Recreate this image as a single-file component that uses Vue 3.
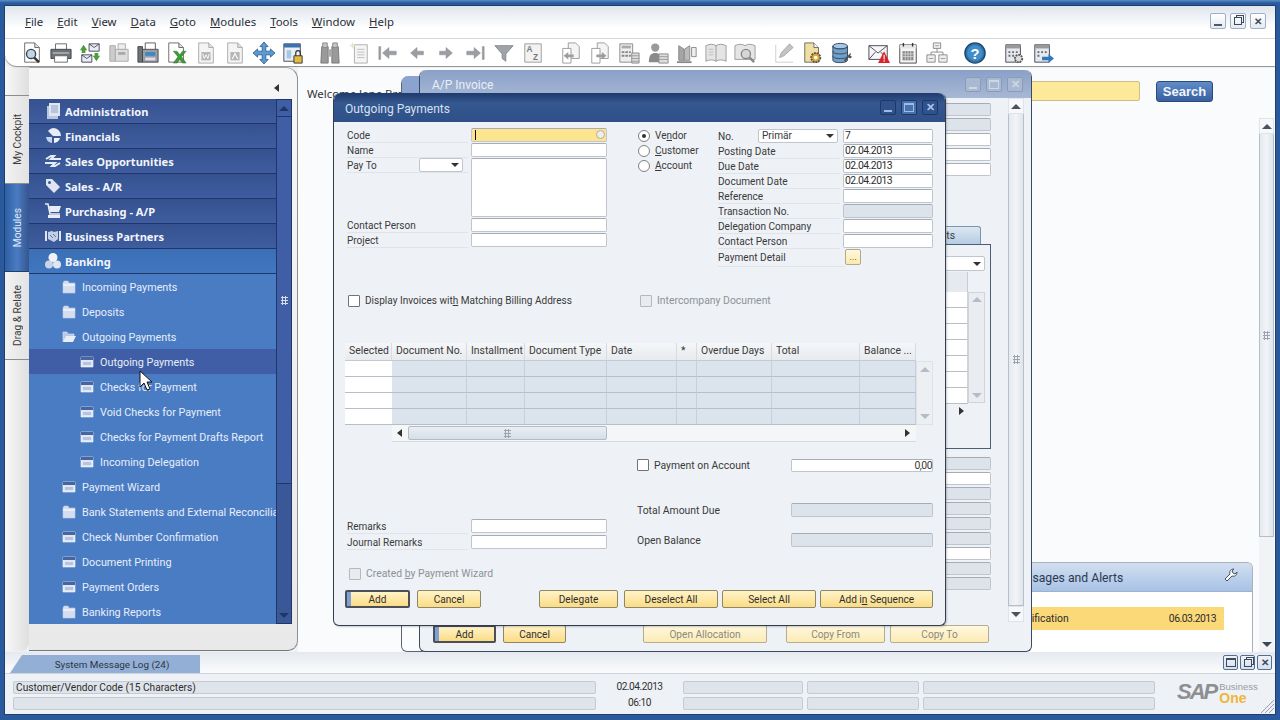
<template>
  <div class="app">
    <!-- icon sheet -->
    <svg class="sheet" width="0" height="0" aria-hidden="true">
      <defs>
        <symbol id="preview" viewBox="0 0 24 24"><path d="M4 1h11l5 5v16H4z" fill="#fff" stroke="#666"/><path d="M15 1v5h5" fill="#ddd" stroke="#666"/><circle cx="11" cy="13" r="5" fill="#bcd6ee" stroke="#444" stroke-width="1.5"/><path d="M14.5 17l5 5" stroke="#333" stroke-width="2.5"/></symbol>
        <symbol id="print" viewBox="0 0 24 24"><path d="M6 2h12v7H6z" fill="#fff" stroke="#666"/><path d="M1 8h22v10H1z" fill="#6d7278" stroke="#444"/><path d="M3 11h18v2H3z" fill="#a5aab0"/><path d="M5 15h14v7H5z" fill="#fff" stroke="#666"/></symbol>
        <symbol id="mailx" viewBox="0 0 24 24"><path d="M11 2h11v8H11zM3 14h11v8H3z" fill="#e9eef5" stroke="#445"/><path d="M11 2l5.500 4 5.500-4M3 14l5.500 4 5.500-4" fill="none" stroke="#445"/><path d="M1 9l4-6 4 6H7v3H3V9zM23 15l-4 6-4-6h2v-3h4v3z" fill="#4f9d3a"/></symbol>
        <symbol id="faxoff" viewBox="0 0 24 24"><path d="M2 4h6v17H2z" fill="#ccc" stroke="#aaa"/><path d="M8 8h14v13H8z" fill="#ddd" stroke="#aaa"/><path d="M11 2h8v6h-8z" fill="#eee" stroke="#aaa"/><path d="M11 11h8v3h-8z" fill="#aaa"/></symbol>
        <symbol id="fax" viewBox="0 0 24 24"><path d="M1 5h5v17H1z" fill="#6d7278" stroke="#444"/><path d="M6 8h17v14H6z" fill="#9a9fa6" stroke="#444"/><path d="M9 1h11v7H9z" fill="#fff" stroke="#555"/><path d="M9 11h11v4H9z" fill="#3e86c6"/><path d="M9 17h11v3H9z" fill="#dde"/></symbol>
        <symbol id="excel" viewBox="0 0 24 24"><path d="M3 1h11l5 5v16H3z" fill="#fff" stroke="#666"/><path d="M14 1v5h5" fill="#ddd" stroke="#666"/><path d="M8 10h4l3 4 3-4h4l-5 6 5 7h-4l-3-4-3 4H8l5-7z" fill="#3f9a38" stroke="#276b22" stroke-width=".5"/></symbol>
        <symbol id="word" viewBox="0 0 24 24"><path d="M4 1h11l5 5v17H4z" fill="#f4f4f4" stroke="#aaa"/><path d="M15 1v5h5" fill="#ddd" stroke="#aaa"/><path d="M7 11h10v9H7z" fill="#b5b5b5"/><path d="M8.500 13l1.500 5 2-4 2 4 1.500-5" fill="none" stroke="#fff" stroke-width="1"/></symbol>
        <symbol id="pdf" viewBox="0 0 24 24"><path d="M4 1h11l5 5v17H4z" fill="#f4f4f4" stroke="#aaa"/><path d="M15 1v5h5" fill="#ddd" stroke="#aaa"/><path d="M7 11h10v9H7z" fill="#b5b5b5"/><path d="M9 18.500l3-6 3 6" fill="none" stroke="#fff" stroke-width="1.200"/></symbol>
        <symbol id="move" viewBox="0 0 24 24"><path d="M12 0l4.500 5H14v5h5V7.500l5 4.500-5 4.500V14h-5v5h2.500L12 24l-4.500-5H10v-5H5v2.500L0 12l5-4.500V10h5V5H7.500z" fill="#5b9bd5" stroke="#1f4f82" stroke-width=".8"/></symbol>
        <symbol id="lockwin" viewBox="0 0 24 24"><path d="M2 2h18v19H2z" fill="#e8eff7" stroke="#445"/><path d="M2 2h18v4H2z" fill="#3d73ad"/><path d="M5 9h5v9H5z" fill="#a9c5e4"/><path d="M13 15h9v8h-9z" fill="#e4b93f" stroke="#333"/><path d="M15 15v-3a2.500 2.500 0 015 0v3" fill="none" stroke="#333" stroke-width="1.300"/></symbol>
        <symbol id="binoc" viewBox="0 0 24 24"><path d="M3 5h7v18H2zM14 5h7l1 18h-8z" fill="#9a9a9a" stroke="#777"/><path d="M4 1h5v5H4zM15 1h5v5h-5z" fill="#c4c4c4" stroke="#888"/><path d="M10 8h4v8h-4z" fill="#aaa"/></symbol>
        <symbol id="newdoc" viewBox="0 0 24 24"><path d="M7 3h14v20H7z" fill="#f5f5f5" stroke="#aaa"/><path d="M10 8h8M10 11h8M10 14h8M10 17h8" stroke="#bbb"/><path d="M5 0l1 3 3 1-3 1-1 3-1-3-3-1 3-1z" fill="#e5e5c8"/></symbol>
        <symbol id="first" viewBox="0 0 24 24"><path d="M2 5h2v14H2zM6 12l7-6v4h8v4h-8v4z" fill="#9a9da1" stroke="#85888c" stroke-width=".5"/></symbol>
        <symbol id="prev" viewBox="0 0 24 24"><path d="M5 12l7-6v4h7v4h-7v4z" fill="#9a9da1" stroke="#85888c" stroke-width=".5"/></symbol>
        <symbol id="next" viewBox="0 0 24 24"><path d="M19 12l-7-6v4H5v4h7v4z" fill="#9a9da1" stroke="#85888c" stroke-width=".5"/></symbol>
        <symbol id="last" viewBox="0 0 24 24"><path d="M22 5h-2v14h2zM18 12l-7-6v4H3v4h8v4z" fill="#9a9da1" stroke="#85888c" stroke-width=".5"/></symbol>
        <symbol id="funnel" viewBox="0 0 24 24"><path d="M2 4h20l-8 9v8l-4-3v-5z" fill="#a0a3a7" stroke="#85888c"/></symbol>
        <symbol id="sortaz" viewBox="0 0 24 24"><path d="M3 2h18v20H3z" fill="#f2f2f2" stroke="#999"/><text x="5" y="11" font-size="9" font-weight="700" font-family="Liberation Sans" fill="#777">A</text><text x="12" y="20" font-size="9" font-weight="700" font-family="Liberation Sans" fill="#777">Z</text></symbol>
        <symbol id="pgback" viewBox="0 0 24 24"><path d="M9 1h8l4 4v13H9z" fill="#f4f4f4" stroke="#999"/><path d="M3 7h9v16H3z" fill="#fff" stroke="#999"/><path d="M4 15l5-4v2.500h6v3H9V19z" fill="#9a9da1"/></symbol>
        <symbol id="pgfwd" viewBox="0 0 24 24"><path d="M9 1h8l4 4v13H9z" fill="#f4f4f4" stroke="#999"/><path d="M3 7h9v16H3z" fill="#fff" stroke="#999"/><path d="M19 15l-5-4v2.500H8v3h6V19z" fill="#9a9da1"/></symbol>
        <symbol id="calc" viewBox="0 0 24 24"><path d="M2 2h14v20H2z" fill="#eee" stroke="#888"/><path d="M4 4h10v3H4z" fill="#aaa"/><path d="M4 10h3v2H4zM8 10h3v2H8zM12 10h2v2h-2zM4 14h3v2H4zM8 14h3v2H8zM12 14h2v2h-2z" fill="#888"/><path d="M15 12h8v11h-8z" fill="#ddd" stroke="#888"/><path d="M15 15h8M15 18h8M15 21h8" stroke="#999"/></symbol>
        <symbol id="person" viewBox="0 0 24 24"><circle cx="9" cy="6" r="4.500" fill="#9a9a9a"/><path d="M2 22c0-8 3-10 7-10s7 2 7 10z" fill="#8a8a8a"/><path d="M13 13h10v10H13z" fill="#ddd" stroke="#888"/><path d="M13 16h10M13 19h10" stroke="#999"/></symbol>
        <symbol id="scales" viewBox="0 0 24 24"><path d="M3 4l6 4v12H3z" fill="#a5a5a5" stroke="#888"/><path d="M9 8l6-4v16H9z" fill="#bbb" stroke="#888"/><path d="M1 22h16" stroke="#888" stroke-width="2"/><path d="M17 6h5v10h-5z" fill="#eee" stroke="#888"/></symbol>
        <symbol id="book" viewBox="0 0 24 24"><path d="M1 4c4-2 8-2 11 0 3-2 7-2 11 0v17c-4-2-8-2-11 0-3-2-7-2-11 0z" fill="#e5e5e5" stroke="#999"/><path d="M12 4v17" stroke="#999"/><path d="M4 8h5M4 11h5M4 14h5" stroke="#bbb"/></symbol>
        <symbol id="booksearch" viewBox="0 0 24 24"><path d="M1 4c4-2 8-2 11 0 3-2 7-2 11 0v15H1z" fill="#e5e5e5" stroke="#999"/><circle cx="13" cy="13" r="5" fill="#d6d6d6" stroke="#888" stroke-width="1.500"/><path d="M17 17l5 5" stroke="#888" stroke-width="2.500"/></symbol>
        <symbol id="pencil" viewBox="0 0 24 24"><path d="M3 22h19M3 3v19" stroke="#ccc"/><path d="M7 17l2-5L18 2l4 4-10 9z" fill="#c4c4c4" stroke="#aaa"/></symbol>
        <symbol id="docgear" viewBox="0 0 24 24"><path d="M3 1h10l5 5v16H3z" fill="#f0dfa0" stroke="#666"/><path d="M13 1v5h5" fill="#fff" stroke="#666"/><circle cx="15" cy="17" r="5" fill="#e0a82e" stroke="#555" stroke-width="2" stroke-dasharray="2 1"/><circle cx="15" cy="17" r="2" fill="#fff"/></symbol>
        <symbol id="dbtool" viewBox="0 0 24 24"><ellipse cx="10" cy="4.500" rx="8" ry="3" fill="#a5c6e4" stroke="#345"/><path d="M2 4.500v15c0 2 3 3 8 3s8-1 8-3v-15c0 2-3 3-8 3s-8-1-8-3z" fill="#6f9fcb" stroke="#345"/><path d="M2 10c0 2 3 3 8 3s8-1 8-3M2 15c0 2 3 3 8 3s8-1 8-3" fill="none" stroke="#345"/><path d="M14 20l6-7 2-1-1 3 2 1-2 2-2-1-3 5z" fill="#555"/></symbol>
        <symbol id="alert" viewBox="0 0 24 24"><path d="M1 4h20v15H1z" fill="#f7f7f7" stroke="#445"/><path d="M1 4l10 8 10-8M1 19l7-8M21 19l-7-8" fill="none" stroke="#445"/><path d="M17.500 10L24 23H11z" fill="#d8232a"/><path d="M17 14h1.200v5H17zM17 20h1.200v1.500H17z" fill="#fff"/></symbol>
        <symbol id="calendar" viewBox="0 0 24 24"><path d="M3 3h18v20H3z" fill="#f5f5f5" stroke="#444"/><path d="M3 3h18v4H3z" fill="#e5e5e5"/><path d="M7 1v4M17 1v4" stroke="#333" stroke-width="1.500"/><path d="M6 10h12v10H6z" fill="#888"/><path d="M6 13h12M6 16h12M9 10v10M12 10v10M15 10v10" stroke="#eee" stroke-width=".7"/></symbol>
        <symbol id="tree" viewBox="0 0 24 24"><path d="M8 1h8v6H8zM1 14h9v8H1zM14 14h9v8h-9z" fill="#eee" stroke="#888"/><path d="M12 7v4M5.500 14v-3h13v3" fill="none" stroke="#888"/><path d="M3 18h5M16 18h5M10 4h4" stroke="#999"/></symbol>
        <symbol id="help" viewBox="0 0 24 24"><circle cx="12" cy="12" r="11" fill="#2f73ad" stroke="#1c4468" stroke-width="1.500"/><circle cx="12" cy="12" r="8.500" fill="#3f8ec9"/><text x="12" y="18" text-anchor="middle" font-size="16" font-weight="700" font-family="Liberation Sans" fill="#fff">?</text></symbol>
        <symbol id="griddoc" viewBox="0 0 24 24"><path d="M3 3h16v19H3z" fill="#e5e8ec" stroke="#445"/><path d="M3 3h16v4H3z" fill="#999"/><path d="M6 10h2v2H6zM10 10h2v2h-2zM14 10h2v2h-2zM6 14h2v2H6zM10 14h2v2h-2z" fill="#667"/><circle cx="17" cy="18" r="4" fill="#ddd" stroke="#555" stroke-width="2" stroke-dasharray="2 1"/></symbol>
        <symbol id="griddoc2" viewBox="0 0 24 24"><path d="M3 3h16v19H3z" fill="#e5e8ec" stroke="#445"/><path d="M3 3h16v4H3z" fill="#999"/><path d="M6 10h2v2H6zM10 10h2v2h-2zM14 10h2v2h-2zM6 14h2v2H6z" fill="#667"/><path d="M24 18l-6-5v3h-7v4h7v3z" fill="#2f78bb"/></symbol>

        <symbol id="s-docs" viewBox="0 0 16 16"><path d="M2 3h11v13H2z" fill="#b9c6de"/><path d="M4 0h11v13H4z" fill="#dfe6f2"/><path d="M6 3h7M6 5h7M6 7h7M6 9h7" stroke="#8ea2c6"/></symbol>
        <symbol id="s-pie" viewBox="0 0 16 16"><path d="M8 0a8 8 0 018 8H8L3 3a8 8 0 015-3z" fill="#e7edf6"/><path d="M1 9h6v6a7 7 0 01-6-6z" fill="#c7d4e8"/><path d="M9 10h6a7 7 0 01-6 5z" fill="#f2f5fa"/></symbol>
        <symbol id="s-swap" viewBox="0 0 16 16"><path d="M0 10h10l-3 3h3l5-3M16 6H6l3-3H6L1 6" fill="none" stroke="#e7edf6" stroke-width="2"/></symbol>
        <symbol id="s-tag" viewBox="0 0 16 16"><path d="M1 1h6l8 8-6 6-8-8z" fill="#dfe6f2"/><circle cx="4.500" cy="4.500" r="1.500" fill="#3a5898"/></symbol>
        <symbol id="s-cart" viewBox="0 0 16 16"><path d="M0 1h3l2 10h10" fill="none" stroke="#e7edf6" stroke-width="1.500"/><path d="M4 3h12l-2 6H5z" fill="#e7edf6"/><path d="M3 12h12v3H3z" fill="#e7edf6"/></symbol>
        <symbol id="s-hands" viewBox="0 0 16 16"><path d="M0 3h2v10H0zM14 3h2v10h-2z" fill="#dfe6f2"/><path d="M3 4l4-1 2 1 4-1v8l-4 3-6-3z" fill="#c2cfe4"/><path d="M5 7l3 3M8 6l3 3" stroke="#5b77ad"/></symbol>
        <symbol id="s-coins" viewBox="0 0 16 16"><circle cx="4" cy="11.500" r="4" fill="#c7d4e8"/><circle cx="12" cy="11.500" r="4" fill="#dfe6f2"/><circle cx="8" cy="4.500" r="4.500" fill="#eef2f8"/></symbol>
        <symbol id="folder" viewBox="0 0 14 14"><path d="M1 3l1-2h4l1 2h6v10H1z" fill="#d5deef" stroke="#bccbe6" stroke-width=".6"/><path d="M1 5h12" stroke="#fff"/></symbol>
        <symbol id="folderopen" viewBox="0 0 14 14"><path d="M1 12V2h4l1 2h6v2" fill="#b7c8e6" stroke="#dfe7f5" stroke-width=".6"/><path d="M1 12l3-6h10l-3 6z" fill="#e8eef8"/></symbol>
        <symbol id="winico" viewBox="0 0 14 14"><path d="M1 2h12v10H1z" fill="#dfe7f4" stroke="#f5f8fc" stroke-width=".6"/><path d="M1 2h12v3H1z" fill="#4a649e"/><path d="M3 7h8v3H3z" fill="#b5c5e1"/></symbol>
      </defs>
    </svg>

    <div class="frame">
      <div class="menubar">
        <span v-for="m in menus" :key="m" class="menu-item">{{ m }}</span>
        <div class="win-btns">
          <span class="mini"><i class="g-min"></i></span>
          <span class="mini"><i class="g-rest"></i></span>
          <span class="mini mini-x">✕</span>
        </div>
      </div>

      <div class="toolbar">
        <span v-for="t in tools" :key="t.id" class="tool" :style="{ marginLeft: t.gap + 'px' }">
          <svg width="22" height="22"><use :href="'#' + t.id" /></svg>
        </span>
      </div>

      <div class="middle">
        <div class="sidetabs">
          <div class="stab-top"></div>
          <div class="stab"><span>My Cockpit</span></div>
          <div class="stab on"><span>Modules</span></div>
          <div class="stab"><span>Drag &amp; Relate</span></div>
          <div class="stab-rest"></div>
        </div>

        <div class="sidepanel">
          <div class="panel-top"><i class="tri-l"></i></div>
          <div class="panel-list">
            <ul class="modules">
              <li v-for="r in modules" :key="r.label + r.level" class="mod" :class="['lv' + r.level, { open: r.open, sel: r.sel }]">
                <svg class="mod-ico"><use :href="'#' + r.icon" /></svg>
                <span>{{ r.label }}</span>
              </li>
            </ul>
            <div class="mod-scroll">
              <div class="mod-cap"><i class="tri-u dark"></i></div>
              <div class="mod-thumb"><span class="dots"></span></div>
              <i class="tri-d dark"></i>
            </div>
          </div>
        </div>

        <div class="desk">
          <div class="cockpit-top">
            <span class="welcome">Welcome Jane Brown</span>
            <div class="search">
              <div class="search-field"></div>
              <button class="search-btn">Search</button>
            </div>
          </div>
          <div class="cockpit-main">
            <div class="cockpit-content">
              <div class="alerts">
                <div class="alerts-head">
                  <span>Messages and Alerts</span>
                  <svg width="14" height="14" viewBox="0 0 14 14"><path d="M3 13l-2-2 5-5c-1-3 1-5 4-5L8 3l1 2 2 1 2-2c0 3-2 5-5 4z" fill="#fff" stroke="#456" stroke-width="1"/></svg>
                </div>
                <div class="alerts-row"><span>Notification</span><span class="num">06.03.2013</span></div>
              </div>
            </div>
            <div class="vscroll main-scroll">
              <div class="sb-btn"><i class="tri-u"></i></div>
              <div class="sb-thumb" style="height: 403px"><span class="dots"></span></div>
              <div class="sb-rest"></div>
              <i class="tri-d"></i>
            </div>
          </div>

          <!-- windows on the desktop -->
          <div class="win-back"></div>

          <div class="win-ap">
            <div class="ap-head">
              <span>A/P Invoice</span>
              <div class="dlg-btns faded">
                <span class="wbtn"><i class="g-min"></i></span>
                <span class="wbtn"><i class="g-max"></i></span>
                <span class="wbtn">✕</span>
              </div>
            </div>
            <div class="ap-body">
              <div class="ap-main">
                <div class="ap-stack" style="padding-top: 5px">
                  <div v-for="(f, i) in apTop" :key="i" class="inp ap-f" :class="{ off: f }"></div>
                </div>
                <div class="ap-tab"><span>Attachments</span></div>
                <div class="ap-panel">
                  <div class="ap-combo"><i class="tri-d dark"></i></div>
                  <div class="ap-grid">
                    <div class="ap-cells">
                      <div class="ap-cell-h"></div>
                      <div v-for="n in 7" :key="n" class="ap-cell"></div>
                    </div>
                    <div class="ap-gsb"><i class="tri-u soft"></i><i class="tri-d soft"></i></div>
                  </div>
                  <div class="ap-arrow"><i class="tri-r"></i></div>
                </div>
                <div class="ap-stack" style="margin-top: 8px">
                  <div v-for="(f, i) in apLow" :key="i" class="inp ap-f" :class="{ off: f }"></div>
                </div>
                <div class="ap-buttons">
                  <button class="btn def" style="width: 63px">Add</button>
                  <button class="btn" style="width: 63px; margin-left: 7px">Cancel</button>
                  <button class="btn dis" style="width: 124px; margin-left: 77px">Open Allocation</button>
                  <button class="btn dis" style="width: 99px; margin-left: 19px">Copy From</button>
                  <button class="btn dis" style="width: 99px; margin-left: 5px">Copy To</button>
                </div>
              </div>
              <div class="vscroll ap-scroll">
                <div class="sb-btn"><i class="tri-u"></i></div>
                <div class="sb-thumb" style="flex: 1"><span class="dots"></span></div>
                <div class="sb-btn"><i class="tri-d"></i></div>
              </div>
            </div>
          </div>

          <div class="dlg">
            <div class="dlg-head">
              <span>Outgoing Payments</span>
              <div class="dlg-btns">
                <span class="wbtn"><i class="g-min"></i></span>
                <span class="wbtn lit"><i class="g-max"></i></span>
                <span class="wbtn">✕</span>
              </div>
            </div>
            <div class="dlg-body">
              <div class="pay-top">
                <div class="pay-left">
                  <div class="line"><label>Code</label><div class="inp focus"><i class="caret"></i><i class="lookup"></i></div></div>
                  <div class="line"><label>Name</label><div class="inp"></div></div>
                  <div class="payto">
                    <label>Pay To<span class="combo small"><i class="tri-d dark"></i></span></label>
                    <div class="inp area"></div>
                  </div>
                  <div class="line"><label>Contact Person</label><div class="inp"></div></div>
                  <div class="line"><label>Project</label><div class="inp"></div></div>
                </div>
                <div class="pay-mid">
                  <div class="radio-line"><span class="radio on"></span><span>Ve<u>n</u>dor</span></div>
                  <div class="radio-line"><span class="radio"></span><span><u>C</u>ustomer</span></div>
                  <div class="radio-line"><span class="radio"></span><span><u>A</u>ccount</span></div>
                </div>
                <div class="pay-right">
                  <div class="rline">
                    <label class="no">No.<span class="combo wide">Primär<i class="tri-d dark"></i></span></label>
                    <div class="inp val">7</div>
                  </div>
                  <div v-for="f in rightFields" :key="f.label" class="rline">
                    <label>{{ f.label }}</label>
                    <div class="inp val num" :class="{ off: f.off }">{{ f.value }}</div>
                  </div>
                  <div class="rline detail">
                    <label>Payment Detail</label>
                    <button class="dots-btn">...</button>
                  </div>
                </div>
              </div>

              <div class="check-row">
                <span class="check"></span><span class="check-text wide">Display Invoices wit<u>h</u> Matching Billing Address</span>
                <span class="check off"></span><span class="check-text muted">Intercompany Document</span>
              </div>

              <div class="grid-wrap">
                <div class="grid">
                  <div class="ghead">
                    <span v-for="c in cols" :key="c.t" class="gh" :style="{ width: c.w + 'px' }">{{ c.t }}</span>
                  </div>
                  <div v-for="n in 4" :key="n" class="grow">
                    <span v-for="(c, i) in cols" :key="c.t" class="gc" :class="{ first: i === 0 }" :style="{ width: c.w + 'px' }"></span>
                  </div>
                </div>
                <div class="gscroll"><i class="tri-u soft"></i><i class="tri-d soft"></i></div>
              </div>
              <div class="hscroll">
                <i class="tri-l"></i>
                <div class="hthumb"><span class="dots h"></span></div>
                <i class="tri-r"></i>
              </div>

              <div class="account-row">
                <span class="check"></span><span class="check-text">Payment on Account</span>
                <div class="inp amount num">0,00</div>
              </div>

              <div class="lower">
                <div class="lower-left">
                  <div class="line"><label>Remarks</label><div class="inp"></div></div>
                  <div class="line gap1"><label>Journal Remarks</label><div class="inp"></div></div>
                </div>
                <div class="lower-right">
                  <div class="tline"><label>Total Amount Due</label><div class="inp off"></div></div>
                  <div class="tline"><label>Open Balance</label><div class="inp off"></div></div>
                </div>
              </div>

              <div class="wizard-row">
                <span class="check off"></span><span class="check-text muted">Created <u>b</u>y Payment Wizard</span>
              </div>

              <div class="dlg-buttons">
                <button class="btn def" style="width: 65px">Add</button>
                <button class="btn" style="width: 64px; margin-left: 7px">Cancel</button>
                <button class="btn" style="width: 79px; margin-left: 58px">Delegate</button>
                <button class="btn" style="width: 94px; margin-left: 6px">Deselect All</button>
                <button class="btn" style="width: 94px; margin-left: 4px">Select All</button>
                <button class="btn" style="width: 113px; margin-left: 4px">Add i<u>n</u> Sequence</button>
              </div>
            </div>
          </div>
        </div>
      </div>

      <div class="bottom">
        <div class="log-row">
          <div class="log-tab">System Message Log (24)</div>
          <div class="log-btns">
            <span class="mini small"><i class="g-max"></i></span>
            <span class="mini small"><i class="g-rest"></i></span>
            <span class="mini small mini-x">✕</span>
          </div>
        </div>
        <div class="status">
          <div class="status-grid">
            <div class="sf sf-main">Customer/Vendor Code (15 Characters)</div>
            <div class="sd num">02.04.2013</div>
            <div class="sf"></div><div class="sf"></div><div class="sf end"></div>
            <div class="sf sf-main"></div>
            <div class="sd num">06:10</div>
            <div class="sf"></div><div class="sf"></div><div class="sf end"></div>
          </div>
          <div class="logo">
            <span class="logo-sap">SAP</span>
            <span class="logo-b"><span>Business</span><b>One</b></span>
          </div>
          <svg class="grip" width="14" height="14" viewBox="0 0 14 14"><path d="M1 14L14 1M5 14l9-9M9 14l5-5" stroke="#9aa3ad"/></svg>
        </div>
      </div>
    </div>

    <svg class="cursor" width="14" height="21" viewBox="0 0 14 21"><path d="M1 1v16l4-4 3 7 3-1-3-7h5z" fill="#fff" stroke="#111"/></svg>
  </div>
</template>

<script setup>
const menus = ['File', 'Edit', 'View', 'Data', 'Goto', 'Modules', 'Tools', 'Window', 'Help']

// gap = extra space in front of the first icon of a group
const toolIds = [
  ['preview', 'print', 'mailx', 'faxoff', 'fax', 'excel', 'word', 'pdf', 'move', 'lockwin'],
  ['binoc', 'newdoc', 'first', 'prev', 'next', 'last', 'funnel', 'sortaz'],
  ['pgback', 'pgfwd', 'calc', 'person', 'scales', 'book', 'booksearch'],
  ['pencil', 'docgear', 'dbtool'],
  ['alert', 'calendar', 'tree'],
  ['help'],
  ['griddoc', 'griddoc2'],
]
const groupGaps = [0, 8, 9, 10, 8, 9, 10]
const tools = toolIds.flatMap((g, i) => g.map((id, j) => ({ id, gap: j === 0 ? groupGaps[i] : 0 })))

const modules = [
  { label: 'Administration', level: 0, icon: 's-docs' },
  { label: 'Financials', level: 0, icon: 's-pie' },
  { label: 'Sales Opportunities', level: 0, icon: 's-swap' },
  { label: 'Sales - A/R', level: 0, icon: 's-tag' },
  { label: 'Purchasing - A/P', level: 0, icon: 's-cart' },
  { label: 'Business Partners', level: 0, icon: 's-hands' },
  { label: 'Banking', level: 0, icon: 's-coins', open: true },
  { label: 'Incoming Payments', level: 1, icon: 'folder' },
  { label: 'Deposits', level: 1, icon: 'folder' },
  { label: 'Outgoing Payments', level: 1, icon: 'folderopen' },
  { label: 'Outgoing Payments', level: 2, icon: 'winico', sel: true },
  { label: 'Checks for Payment', level: 2, icon: 'winico' },
  { label: 'Void Checks for Payment', level: 2, icon: 'winico' },
  { label: 'Checks for Payment Drafts Report', level: 2, icon: 'winico' },
  { label: 'Incoming Delegation', level: 2, icon: 'winico' },
  { label: 'Payment Wizard', level: 1, icon: 'winico' },
  { label: 'Bank Statements and External Reconciliation', level: 1, icon: 'folder' },
  { label: 'Check Number Confirmation', level: 1, icon: 'winico' },
  { label: 'Document Printing', level: 1, icon: 'winico' },
  { label: 'Payment Orders', level: 1, icon: 'winico' },
  { label: 'Banking Reports', level: 1, icon: 'folder' },
]

const rightFields = [
  { label: 'Posting Date', value: '02.04.2013' },
  { label: 'Due Date', value: '02.04.2013' },
  { label: 'Document Date', value: '02.04.2013' },
  { label: 'Reference', value: '' },
  { label: 'Transaction No.', value: '', off: true },
  { label: 'Delegation Company', value: '' },
  { label: 'Contact Person', value: '' },
]

const cols = [
  { t: 'Selected', w: 47 },
  { t: 'Document No.', w: 75 },
  { t: 'Installment', w: 58 },
  { t: 'Document Type', w: 82 },
  { t: 'Date', w: 70 },
  { t: '*', w: 20 },
  { t: 'Overdue Days', w: 75 },
  { t: 'Total', w: 88 },
  { t: 'Balance ...', w: 56 },
]

const apTop = [true, true, false, false, false]
const apLow = [true, false, true, true, true, true, false, true, true]
</script>

<style>
html, body { margin: 0; background: #2a5a9b; }
</style>

<style scoped>
.app { position: relative; width: 1280px; height: 720px; overflow: hidden; font-family: Roboto, "Liberation Sans", sans-serif; font-size: 10.4px; color: #3a3a3a; background: linear-gradient(#5c8fca, #2a5a9b 3px); }
.sheet { position: absolute; }
.num { letter-spacing: -.5px; }
.frame { position: absolute; inset: 6px 5px 6px 5px; display: flex; flex-direction: column; background: #eef1f5; box-shadow: 0 0 0 1px #1d3f70; }

.menubar { height: 32px; flex: none; display: flex; align-items: center; gap: 14px; padding: 0 0 2px 20px; box-sizing: border-box; background: linear-gradient(#dfe5ed, #fff 70%); font-family: "Noto Sans", sans-serif; font-size: 11.4px; color: #2b2f36; }
.menu-item::first-letter { text-decoration: underline; }
.win-btns { margin-left: auto; margin-right: 9px; display: flex; gap: 4px; }
.mini { width: 16px; height: 16px; display: flex; align-items: center; justify-content: center; border: 1px solid #9fb0c6; border-radius: 2px; background: linear-gradient(#fff, #e5eaf1); box-sizing: border-box; position: relative; }
.mini-x { font-size: 10px; font-weight: 700; color: #3c4a5c; }
.g-min { position: absolute; left: 3px; right: 3px; bottom: 2px; height: 2px; background: #4b5b6f; }
.g-rest { width: 6px; height: 6px; border: 1px solid #3c4a5c; box-shadow: 2px -2px 0 -1px #eef1f5, 2px -2px 0 0 #3c4a5c; }
.g-max { width: 8px; height: 6px; border: 1px solid #3c4a5c; border-top-width: 2px; }

.toolbar { height: 28px; flex: none; display: flex; align-items: center; padding-left: 12px; background: #fff; border-top: 1px solid #d5d9df; border-bottom-left-radius: 12px; box-shadow: 0 1px 1px #8a8f96; position: relative; z-index: 2; box-sizing: border-box; }
.tool { width: 29px; height: 22px; flex: none; display: flex; justify-content: center; }

.middle { flex: 1; display: flex; min-height: 0; }
.sidetabs { width: 24px; flex: none; display: flex; flex-direction: column; background: linear-gradient(90deg, #f8f8f8, #dfdfdf); border-bottom-right-radius: 8px; margin-bottom: 1px; }
.stab-top { height: 30px; flex: none; border-bottom: 1px solid #8d8d8d; border-top-right-radius: 8px; box-sizing: border-box; }
.stab { height: 88px; flex: none; display: flex; align-items: center; justify-content: center; color: #3c3c3c; border-bottom: 1px solid #8d8d8d; box-sizing: border-box; background: linear-gradient(90deg, #f2f2f2, #e3e3e3); }
.stab span { writing-mode: vertical-rl; transform: rotate(180deg); font-size: 10.2px; }
.stab.on { background: linear-gradient(90deg, #2f5fa3, #4a7cc3 50%, #35558f); color: #dfe8f5; border-color: #1d3f70; }
.stab-rest { flex: 1; }

.sidepanel { width: 269px; flex: none; display: flex; flex-direction: column; margin-top: 1px; margin-bottom: 1px; box-sizing: border-box; padding-right: 6px; background: linear-gradient(#f6f6f6, #e9e9e9); border-right: 1px solid #8d8f92; border-bottom: 1px solid #777; border-top-right-radius: 12px; border-bottom-right-radius: 10px; border-top: 1px solid #aaa; }
.panel-top { height: 31px; flex: none; display: flex; align-items: center; justify-content: flex-end; padding: 8px 12px 0 0; box-sizing: border-box; }
.panel-list { display: flex; height: 525px; flex: none; width: 263px; }
.modules { list-style: none; margin: 0; padding: 0; width: 247px; flex: none; overflow: hidden; }
.mod { height: 25px; display: flex; align-items: center; white-space: nowrap; box-sizing: border-box; color: #e7eefa; font-size: 10.8px; background: #4a7cc3; }
.mod.lv0 { background: linear-gradient(#35518f, #3f5d9f); border-bottom: 1px solid #1f3768; color: #f2f5fb; font-family: "Noto Sans", sans-serif; font-weight: 700; font-size: 11.1px; padding-left: 16px; }
.mod.lv0.open { background: linear-gradient(#3b6fb5, #4077bf); }
.mod.lv0 .mod-ico { width: 16px; height: 16px; margin-right: 4px; }
.mod.lv1 { padding: 1px 0 0 33px; }
.mod.lv2 { padding: 1px 0 0 51px; }
.mod .mod-ico { width: 14px; height: 14px; margin-right: 6px; flex: none; }
.mod.sel { background: #3f5ea5; }
.mod-scroll { width: 16px; flex: none; position: relative; background: #3a5898; border: 1px solid #1f3768; box-sizing: border-box; display: flex; flex-direction: column; align-items: center; }
.mod-cap { height: 17px; width: 100%; flex: none; display: flex; align-items: center; justify-content: center; background: #3f5ea5; border-bottom: 1px solid #1f3768; box-sizing: border-box; }
.mod-thumb { height: 367px; width: 100%; flex: none; background: #3f5ea5; border-bottom: 1px solid #1f3768; display: flex; align-items: center; justify-content: center; box-sizing: border-box; }
.mod-scroll > .tri-d { position: absolute; bottom: 5px; left: 2px; }

.tri-u, .tri-d, .tri-l, .tri-r { display: block; width: 0; height: 0; border: 5px solid transparent; }
.tri-u { border-top: 0; border-bottom: 5px solid #4a5360; }
.tri-d { border-bottom: 0; border-top: 5px solid #4a5360; }
.tri-l { border-width: 4px 5px 4px 0; border-right-color: #333; border-left: 0; }
.tri-r { border-width: 4px 0 4px 5px; border-left-color: #333; border-right: 0; }
.tri-u.dark { border-bottom-color: #1f3768; }
.tri-d.dark { border-top-color: #333; border-left-width: 4px; border-right-width: 4px; border-top-width: 4px; }
.mod-scroll .tri-d.dark { border-top-color: #1f3768; border-left-width: 5px; border-right-width: 5px; border-top-width: 5px; }
.tri-u.soft { border-bottom-color: #b5bcc6; }
.tri-d.soft { border-top-color: #b5bcc6; }
.dots { display: block; width: 7px; height: 9px; background: radial-gradient(circle, #d5deea 1px, transparent 1.200px) 0 0 / 3px 3px; }

.desk { flex: 1; position: relative; min-width: 0; display: flex; flex-direction: column; background: #fafbfc; margin-top: 1px; }
.cockpit-top { height: 51px; flex: none; display: flex; justify-content: space-between; box-sizing: border-box; padding: 14px 62px 0 9px; }
.welcome { line-height: 25px; font-family: "Noto Sans", sans-serif; font-size: 11.4px; color: #333; }
.search { display: flex; gap: 16px; }
.search-field { width: 170px; height: 20px; background: #fde99a; border: 1px solid #cdbf8a; border-radius: 2px; box-sizing: border-box; }
.search-btn { width: 57px; height: 21px; padding: 0; border: 1px solid #29497f; border-radius: 3px; background: linear-gradient(#5f8cc7, #3a5f9e); color: #f2f6fb; font-family: "Liberation Sans", sans-serif; font-size: 13px; font-weight: 700; }
.cockpit-main { flex: 1; display: flex; min-height: 0; }
.cockpit-content { flex: 1; display: flex; align-items: flex-end; min-width: 0; }
.alerts { height: 90px; flex: 1; margin-left: 702px; margin-right: 6px; border: 1px solid #a9b1bc; border-bottom: 0; border-radius: 6px 6px 0 0; box-sizing: border-box; background: #fff; }
.alerts-head { height: 29px; display: flex; justify-content: space-between; align-items: flex-start; padding: 8px 14px 0 8px; box-sizing: border-box; font-size: 12.2px; color: #2c3a50; background: linear-gradient(#d2dff0, #a8c2e6); border-bottom: 1px solid #9fb2cc; border-radius: 5px 5px 0 0; }
.alerts-head svg { margin-top: -3px; }
.alerts-row { margin: 15px 28px 0 3px; height: 23px; display: flex; align-items: center; justify-content: space-between; padding: 0 8px 0 11px; background: #fbd878; color: #2d2d2d; }
.vscroll { display: flex; flex-direction: column; align-items: center; box-sizing: border-box; }
.main-scroll { width: 15px; margin-right: 1px; background: #f1f3f6; position: relative; }
.main-scroll > .tri-d { position: absolute; bottom: 5px; border-top-color: #3c4654; }
.sb-btn { width: 100%; height: 16px; flex: none; display: flex; align-items: center; justify-content: center; background: #f7f8fa; border: 1px solid #e0e3e8; box-sizing: border-box; }
.sb-thumb { width: 100%; box-sizing: border-box; flex: none; display: flex; align-items: center; justify-content: center; background: linear-gradient(90deg, #e4eaf1, #f1f4f8 50%, #dfe5ec); border-left: 1px solid #b7bec8; border-right: 1px solid #b7bec8; border-bottom: 1px solid #b7bec8; }
.sb-thumb .dots { background-image: radial-gradient(circle, #9aa3af 1px, transparent 1.200px); }
.sb-rest { flex: 1; }

.win-back { position: absolute; left: 103px; top: 9px; width: 120px; height: 576px; box-sizing: border-box; background: #fbfcfd; border: 1px solid #5b6470; border-top: 0; border-radius: 8px 8px 6px 6px; }
.win-back::before { content: ""; display: block; height: 22px; background: #8aa4cf; border-radius: 6px 6px 0 0; }

.win-ap { position: absolute; left: 121px; top: 3px; width: 613px; height: 582px; box-sizing: border-box; display: flex; flex-direction: column; background: #eef2f6; border: 1px solid #3a4a60; border-top: 0; border-radius: 7px 7px 6px 6px; }
.ap-head { height: 28px; flex: none; display: flex; justify-content: space-between; align-items: center; box-sizing: border-box; padding: 0 8px 0 12px; background: linear-gradient(#8aa0c8, #a7b8d4); color: #e9eff7; font-size: 12px; border-radius: 7px 7px 0 0; }
.ap-head > span { padding-top: 2px; }
.ap-body { flex: 1; display: flex; min-height: 0; }
.ap-main { flex: 1; min-width: 0; display: flex; flex-direction: column; align-items: flex-end; padding-right: 17px; }
.ap-stack { display: flex; flex-direction: column; gap: 2px; }
.ap-f { width: 150px; height: 13px; }
.ap-tab { width: 180px; height: 18px; margin-top: 50px; box-sizing: border-box; display: flex; justify-content: flex-end; }
.ap-tab span { width: 100px; margin-right: 10px; text-align: right; padding-right: 25px; box-sizing: border-box; background: linear-gradient(#dbe7f2, #b5cce3); border: 1px solid #7e94ac; border-bottom: 0; border-radius: 3px 3px 0 0; line-height: 17px; }
.ap-panel { width: 180px; height: 205px; box-sizing: border-box; background: #eef2f6; border: 1px solid #4d5e74; padding: 11px 5px 0 0; display: flex; flex-direction: column; align-items: flex-end; position: relative; }
.ap-combo { width: 130px; height: 15px; background: #fff; border: 1px solid #c0c6ce; box-sizing: border-box; border-radius: 2px; display: flex; align-items: center; justify-content: flex-end; padding-right: 3px; }
.ap-grid { display: flex; margin-top: 1px; align-items: flex-start; }
.ap-cells { width: 60px; }
.ap-cell-h { height: 20px; background: #e6e9ed; border-right: 1px solid #c8ccd2; }
.ap-cell { height: 16px; box-sizing: border-box; background: #fff; border-bottom: 1px solid #b8bec6; border-right: 1px solid #d0d4da; }
.ap-gsb { width: 17px; height: 111px; margin-top: 20px; background: #e9edf2; border: 1px solid #d0d4da; box-sizing: border-box; display: flex; flex-direction: column; align-items: center; justify-content: space-between; padding: 4px 0; }
.ap-arrow { position: absolute; right: 26px; top: 162px; }
.ap-buttons { display: flex; align-self: flex-start; margin-top: 35px; margin-left: 13px; }
.ap-scroll { width: 16px; height: 524px; margin-right: 7px; flex: none; }

.dlg { position: absolute; left: 35px; top: 26px; width: 613px; height: 533px; box-sizing: border-box; display: flex; flex-direction: column; background: #eef2f6; border: 1px solid #333d4c; border-top: 0; border-radius: 7px 7px 6px 6px; box-shadow: 1px 1px 2px rgba(0,0,0,.2); }
.dlg-head { height: 29px; flex: none; display: flex; justify-content: space-between; align-items: center; box-sizing: border-box; padding: 0 7px 0 11px; background: linear-gradient(#1f3a6e, #34588f 35%, #2f4f88); color: #d5e1f2; font-size: 12px; border-radius: 7px 7px 0 0; }
.dlg-head > span { padding-top: 2px; }
.dlg-btns { display: flex; gap: 5px; }
.wbtn { width: 16px; height: 15px; position: relative; display: flex; align-items: center; justify-content: center; font-size: 11px; font-weight: 700; color: #a7c4ec; background: #30528c; border: 1px solid #1e3765; border-radius: 2px; box-sizing: border-box; }
.wbtn.lit { background: #4772ad; }
.wbtn .g-min { background: #9dbbe4; }
.wbtn .g-max { border-color: #9dbbe4; }
.faded .wbtn { background: #aab9d2; border-color: #8b9ab5; color: #cdd7e6; }
.faded .wbtn .g-min { background: #cdd7e6; }
.faded .wbtn .g-max { border-color: #cdd7e6; }
.dlg-body { flex: 1; padding: 0 12px 0 11px; }

.inp { box-sizing: border-box; background: #fff; border: 1px solid #c0c5cc; border-top-color: #a6acb5; border-radius: 2px; position: relative; }
.inp.off { background: #dde3ea; }
.inp.focus { background: #fde58f; }
.caret { position: absolute; left: 3px; top: 1px; width: 1px; height: 10px; background: #111; }
.lookup { position: absolute; right: 1px; top: 1px; width: 9px; height: 9px; box-sizing: border-box; border: 1px solid #b4ae8e; border-radius: 50%; background: #eee; }
label { display: block; border-bottom: 1px solid #e0e4e9; box-sizing: border-box; padding-top: 1px; }

.pay-top { height: 172px; padding-top: 6px; box-sizing: border-box; display: flex; }
.pay-left { width: 262px; margin-left: 2px; flex: none; }
.line { display: grid; grid-template-columns: 124px 136px; height: 15px; }
.line label { line-height: 13px; margin-right: 3px; font-size: 10px; }
.line .inp { height: 14px; }
.payto { display: grid; grid-template-columns: 124px 136px; height: 60px; }
.payto label { height: 15px; line-height: 13px; margin-right: 3px; position: relative; font-size: 10px; }
.combo { position: absolute; box-sizing: border-box; background: #fff; border: 1px solid #c0c5cc; display: flex; align-items: center; justify-content: space-between; padding: 0 3px; border-radius: 2px; }
.combo.small { left: 72px; top: 0; width: 44px; height: 14px; justify-content: flex-end; }
.inp.area { height: 59px; }
.pay-mid { width: 80px; margin-left: 29px; flex: none; font-size: 10px; }
.radio-line { height: 15px; display: flex; align-items: center; gap: 5px; }
.radio { width: 12px; height: 12px; box-sizing: border-box; border: 1px solid #7c8187; border-radius: 50%; background: #fff; position: relative; }
.radio.on::after { content: ""; position: absolute; left: 3px; top: 3px; width: 4px; height: 4px; border-radius: 50%; background: #333; }
.pay-right { width: 215px; flex: none; padding-top: 1px; }
.rline { display: flex; justify-content: space-between; height: 15px; }
.rline label { flex: 1; margin-right: 3px; line-height: 13px; position: relative; font-size: 10.1px; }
.rline .val { width: 90px; height: 14px; flex: none; line-height: 12px; padding-left: 1px; color: #2d2d2d; }
label.no { border-bottom: 0; }
.combo.wide { left: 40px; top: 0; width: 80px; height: 14px; line-height: 12px; }
.detail { height: 17px; margin-top: 1px; justify-content: flex-start; }
.detail label { flex: none; width: 127px; margin: 0; }
.dots-btn { width: 16px; height: 16px; padding: 0; margin-top: -1px; border: 1px solid #b0aa8d; border-radius: 2px; background: linear-gradient(#fff8dd, #fbe9ae); font-size: 9px; color: #7a6a2d; line-height: 10px; }

.check-row { height: 13px; display: flex; align-items: center; padding-left: 3px; }
.check { width: 12px; height: 12px; flex: none; box-sizing: border-box; background: #fff; border: 1px solid #6f747a; border-radius: 1px; }
.check.off { background: #e9ecef; border-color: #b5b9bf; }
.check-text { margin-left: 5px; white-space: nowrap; }
.check-text.wide { width: 275px; flex: none; font-size: 10.05px; }
.muted { color: #8d9196; }

.grid-wrap { display: flex; margin-top: 36px; align-items: flex-start; }
.grid { width: 571px; flex: none; }
.ghead { height: 18px; display: flex; background: linear-gradient(#f5f6f8, #e7ebef); border-bottom: 1px solid #c5cad1; box-sizing: border-box; }
.gh { box-sizing: border-box; border-right: 1px solid #d8dce1; padding-left: 4px; line-height: 16px; white-space: nowrap; overflow: hidden; flex: none; }
.grow { height: 16px; display: flex; }
.gc { box-sizing: border-box; flex: none; height: 16px; background: #dbe4ed; border-right: 1px solid #c6d0da; border-bottom: 1px solid #b6bfc9; }
.gc.first { background: #fff; border-right: 0; }
.gscroll { width: 17px; height: 64px; margin-top: 18px; box-sizing: border-box; background: #edf0f3; border: 1px solid #dfe3e8; display: flex; flex-direction: column; align-items: center; justify-content: space-between; padding: 5px 0; }
.hscroll { height: 17px; width: 524px; margin-left: 47px; box-sizing: border-box; display: flex; align-items: center; background: #f4f6f8; border-bottom: 1px solid #d5dae0; padding: 0 6px 0 5px; position: relative; }
.hthumb { position: absolute; left: 16px; width: 199px; height: 14px; top: 1px; display: flex; align-items: center; justify-content: center; box-sizing: border-box; background: linear-gradient(#e9eef3, #d6dee7); border: 1px solid #b3bcc6; border-radius: 2px; }
.hthumb .dots { background-image: radial-gradient(circle, #9aa3af 1px, transparent 1.200px); }
.hscroll .tri-r { margin-left: auto; }

.account-row { height: 14px; margin-top: 16px; display: flex; align-items: center; padding-left: 292px; }
.amount { margin-left: auto; width: 142px; height: 13px; line-height: 11px; text-align: right; }

.lower { height: 78px; display: flex; }
.lower-left { width: 292px; flex: none; padding: 47px 0 0 2px; box-sizing: border-box; }
.line.gap1 { margin-top: 1px; }
.lower-right { flex: 1; padding-top: 31px; display: flex; flex-direction: column; gap: 16px; }
.tline { display: flex; justify-content: space-between; height: 14px; }
.tline label { border: 0; line-height: 14px; }
.tline .inp { width: 142px; }

.wizard-row { height: 13px; margin-top: 17px; display: flex; align-items: center; padding-left: 4px; }
.dlg-buttons { display: flex; margin-top: 10px; }
.btn { height: 18px; padding: 0; box-sizing: border-box; flex: none; font-family: inherit; font-size: 10.1px; color: #2f2f2f; border: 1px solid #8d8768; border-radius: 2px; background: linear-gradient(#fff3c8, #fbdc85); }
.btn.def { border: 2px solid #4b4f58; box-shadow: inset 4px 0 0 #7fa0d4; }
.btn.dis { color: #8a8a78; background: linear-gradient(#fff8df, #fcebb5); border-color: #b3ae92; }

.bottom { height: 62px; flex: none; display: flex; flex-direction: column; background: #eef1f5; }
.log-row { height: 22px; flex: none; position: relative; display: flex; justify-content: space-between; background: linear-gradient(#e5e9ef, #fbfcfd); border-bottom: 1px solid #cfd4da; box-sizing: border-box; }
.log-tab { margin: 3px 0 0 5px; width: 190px; height: 18px; text-align: center; padding-left: 14px; box-sizing: border-box; line-height: 20px; font-size: 9.9px; background: #93afd6; color: #2c3644; clip-path: polygon(12px 0, 100% 0, 100% 100%, 0 100%); }
.log-btns { display: flex; gap: 2px; margin: 3px 3px 0 0; }
.mini.small { width: 15px; height: 15px; background: linear-gradient(#eef3fa, #d5e0ef); border-color: #54708f; }
.status { flex: 1; display: flex; background: #eef1f5; position: relative; }
.status-grid { width: 1150px; flex: none; margin-left: 8px; margin-top: 7px; display: grid; grid-template-columns: 583px 87px 124px 116px 232px; grid-template-rows: 13px 13px; row-gap: 3px; font-size: 10.2px; }
.sf { box-sizing: border-box; background: #dfe4ea; border: 1px solid #c5cbd2; border-radius: 2px; padding-left: 2px; line-height: 11px; margin-right: 4px; color: #2d2d2d; }
.sf-main, .sf.end { margin-right: 0; }
.sd { text-align: center; line-height: 12px; color: #333; }
.logo { display: flex; margin-left: 14px; margin-top: 8px; align-items: flex-start; }
.logo-sap { font-family: "Liberation Sans", sans-serif; font-size: 22px; font-style: italic; font-weight: 700; letter-spacing: -2px; line-height: 20px; color: #8d8f92; }
.logo-b { display: flex; flex-direction: column; margin-left: 3px; font-family: "Liberation Sans", sans-serif; font-size: 9.5px; line-height: 10px; color: #9a9c9f; }
.logo-b b { font-size: 14px; line-height: 12px; color: #eeb63a; }
.grip { position: absolute; right: 1px; bottom: 1px; }

.cursor { position: absolute; left: 139px; top: 370px; }
</style>
